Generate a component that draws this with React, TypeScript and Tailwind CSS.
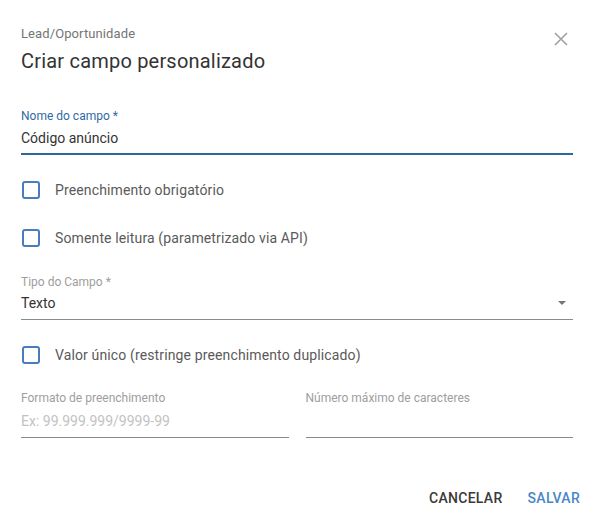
import React from "react";

function Checkbox({ label }: { label: string }) {
  return (
    <label className="flex items-center h-6">
      <span className="w-[18px] h-[18px] border-2 border-[#4a7cbd] rounded-[3px] ml-[1px] shrink-0" />
      <span className="ml-[15px] text-[14px] leading-5 text-[#5a5a5a] tracking-[0.13px]">{label}</span>
    </label>
  );
}

export default function App() {
  return (
    <div className="w-[594px] h-[521px] bg-white font-['Roboto',sans-serif] px-[21px] flex flex-col">
      <div className="flex justify-between pt-6">
        <div className="flex flex-col">
          <div className="text-[13px] leading-5 text-[#757575] tracking-[0.1px]">Lead/Oportunidade</div>
          <div className="mt-[3px] text-[20px] leading-7 text-[#333] tracking-[0.2px]">Criar campo personalizado</div>
        </div>
        <button className="mt-[7px] mr-[4px] w-[16px] h-[16px] flex items-center justify-center">
          <svg width="16" height="16" viewBox="0 0 16 16">
            <path d="M2 2L14 14M14 2L2 14" stroke="#a0a0a0" strokeWidth="1.6" />
          </svg>
        </button>
      </div>

      <div className="mt-[33px] flex flex-col border-b-2 border-[#2b679f] pb-[5px]">
        <div className="text-[12px] leading-4 text-[#2f6aa6]">Nome do campo *</div>
        <div className="mt-1 text-[14px] leading-5 text-[#333]">Código anúncio</div>
      </div>

      <div className="mt-[23px]">
        <Checkbox label="Preenchimento obrigatório" />
      </div>
      <div className="mt-6">
        <Checkbox label="Somente leitura (parametrizado via API)" />
      </div>

      <div className="mt-6 flex flex-col border-b border-[#8a8a8a] pb-[6px]">
        <div className="text-[12px] leading-4 text-[#9e9e9e]">Tipo do Campo *</div>
        <div className="mt-[3px] flex items-center justify-between">
          <span className="text-[14px] leading-5 text-[#333]">Texto</span>
          <svg width="8" height="4" viewBox="0 0 8 4" className="mr-[7px]">
            <path d="M0 0H8L4 4Z" fill="#767676" />
          </svg>
        </div>
      </div>

      <div className="mt-[23px]">
        <Checkbox label="Valor único (restringe preenchimento duplicado)" />
      </div>

      <div className="mt-[23px] grid grid-cols-2 gap-[17px]">
        <div className="flex flex-col border-b border-[#8a8a8a] pb-[6px]">
          <div className="text-[12px] leading-4 text-[#9e9e9e]">Formato de preenchimento</div>
          <div className="mt-[5px] text-[14px] leading-5 text-[#c2c2c2]">Ex: 99.999.999/9999-99</div>
        </div>
        <div className="flex flex-col border-b border-[#8a8a8a] pb-[6px]">
          <div className="text-[12px] leading-4 text-[#9e9e9e]">Número máximo de caracteres</div>
          <div className="mt-[5px] h-5" />
        </div>
      </div>

      <div className="mt-[50px] flex justify-end items-center gap-[25px] -mr-[7px]">
        <button className="text-[14px] leading-5 font-medium text-[#3a3a3a] tracking-[0.3px]">CANCELAR</button>
        <button className="text-[14px] leading-5 font-medium text-[#4a86c8] tracking-[0.3px]">SALVAR</button>
      </div>
    </div>
  );
}
